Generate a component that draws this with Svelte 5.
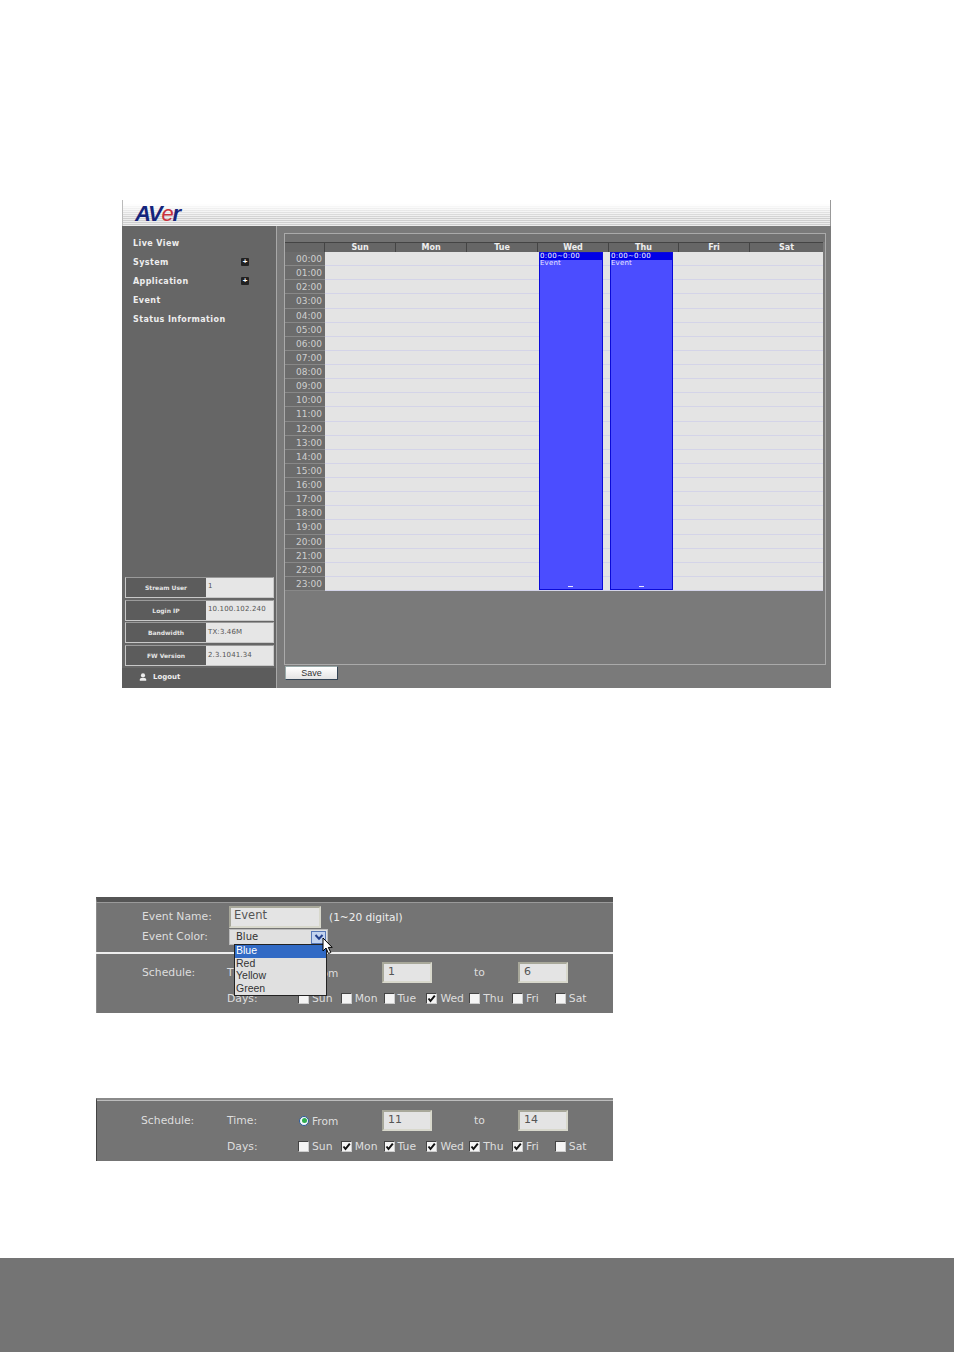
<script>
  const nav = [
    { label: 'Live View' },
    { label: 'System', plus: true },
    { label: 'Application', plus: true },
    { label: 'Event' },
    { label: 'Status Information' }
  ];
  const stats = [
    ['Stream User', '1'],
    ['Login IP', '10.100.102.240'],
    ['Bandwidth', 'TX:3.46M'],
    ['FW Version', '2.3.1041.34']
  ];
  const cols = [
    ['Sun', 71], ['Mon', 71], ['Tue', 71], ['Wed', 71], ['Thu', 70], ['Fri', 71], ['Sat', 74]
  ];
  const hours = Array.from({ length: 24 }, (_, i) => String(i).padStart(2, '0') + ':00');
  const days = ['Sun', 'Mon', 'Tue', 'Wed', 'Thu', 'Fri', 'Sat'];
  const daysA = [false, false, false, true, false, false, false];
  const daysB = [false, true, true, true, true, true, false];
  const options = ['Blue', 'Red', 'Yellow', 'Green'];
</script>

{#snippet dayRow(checked)}
  <div class="dayset">
    {#each days as d, i}
      <span class="day">
        <span class="check">
          {#if checked[i]}
            <svg viewBox="0 0 9 9" width="9" height="9"><path d="M1.5 4.5 L3.5 7 L7.8 1.6" fill="none" stroke="#111" stroke-width="2"/></svg>
          {/if}
        </span>
        <span class="daytext">{d}</span>
      </span>
    {/each}
  </div>
{/snippet}

<div class="page">
  <section class="app">
    <header class="apphead">
      <span class="logo">AV<span class="logo-e">e</span>r</span>
    </header>
    <div class="appbody">
      <aside class="side">
        <nav class="nav">
          {#each nav as n}
            <div class="navitem">
              <span>{n.label}</span>
              {#if n.plus}<span class="plus">+</span>{/if}
            </div>
          {/each}
        </nav>
        <div class="stats">
          {#each stats as s}
            <div class="stat">
              <span class="statlabel">{s[0]}</span>
              <span class="statvalue">{s[1]}</span>
            </div>
          {/each}
        </div>
        <div class="logout">
          <svg viewBox="0 0 10 10" width="8" height="8"><circle cx="5" cy="3" r="2.6" fill="#eee"/><path d="M1 9.6 V8 Q1 6.5 3 6.2 H7 Q9 6.5 9 8 V9.6 Z" fill="#eee"/></svg>
          <span>Logout</span>
        </div>
      </aside>
      <main class="main">
        <div class="panel">
          <div class="panelbar"></div>
          <div class="cal">
            <div class="calhead">
              <span class="corner"></span>
              {#each cols as c}
                <span class="colhead" style="width:{c[1]}px">{c[0]}</span>
              {/each}
            </div>
            {#each hours as h}
              <div class="calrow">
                <span class="hour">{h}</span>
                <span class="cells"></span>
              </div>
            {/each}
            <div class="event wed">
              <div class="evtime">0:00~0:00</div>
              <div class="evname">Event</div>
              <div class="evgrip"></div>
            </div>
            <div class="event thu">
              <div class="evtime">0:00~0:00</div>
              <div class="evname">Event</div>
              <div class="evgrip"></div>
            </div>
          </div>
        </div>
        <button class="save">Save</button>
      </main>
    </div>
  </section>

  <section class="form formA">
    <div class="part partA">
      <div class="frow nameRow">
        <span class="lab">Event Name:</span>
        <span class="field nameField">Event</span>
        <span class="hint">(1~20 digital)</span>
      </div>
      <div class="frow colorRow">
        <span class="lab">Event Color:</span>
        <span class="select">
          <span>Blue</span>
          <span class="arrow">
            <svg viewBox="0 0 10 10" width="10" height="10"><path d="M1.5 3 L5 6.8 L8.5 3" fill="none" stroke="#24408c" stroke-width="2"/></svg>
          </span>
        </span>
      </div>
    </div>
    <div class="part partB">
      <div class="frow schedRow">
        <span class="lab">Schedule:</span>
        <span class="lab2">Time:</span>
        <span class="radioCell">
          <span class="radio"><span class="dot"></span></span>
          <span class="fromword">From</span>
        </span>
        <span class="field num">1</span>
        <span class="toword">to</span>
        <span class="field num">6</span>
      </div>
      <div class="frow daysRow">
        <span class="lab"></span>
        <span class="lab2">Days:</span>
        {@render dayRow(daysA)}
      </div>
    </div>
    <div class="dropdown">
      {#each options as o, i}
        <div class="opt" class:sel={i === 0}>{o}</div>
      {/each}
    </div>
    <svg class="cursor" viewBox="0 0 12 18" width="12" height="18"><path d="M1 1 V14 L4 11 L6.5 16.5 L8.8 15.5 L6.3 10.4 L10.2 10.4 Z" fill="#fff" stroke="#000" stroke-width="1"/></svg>
  </section>

  <section class="form formB">
    <div class="frow schedRow2">
      <span class="lab labB">Schedule:</span>
      <span class="lab2">Time:</span>
      <span class="radioCell">
        <span class="radio"><span class="dot"></span></span>
        <span class="fromword">From</span>
      </span>
      <span class="field num">11</span>
      <span class="toword">to</span>
      <span class="field num">14</span>
    </div>
    <div class="frow daysRow2">
      <span class="lab labB"></span>
      <span class="lab2">Days:</span>
      {@render dayRow(daysB)}
    </div>
  </section>

  <footer class="foot"></footer>
</div>

<style>
  :global(body) { margin: 0; background: #fff; }
  .page {
    width: 954px; height: 1352px; display: flex; flex-direction: column;
    padding-top: 200px; box-sizing: border-box; overflow: hidden;
    font-family: "DejaVu Sans", sans-serif;
  }
  .app { margin-left: 122px; width: 709px; height: 488px; display: flex; flex-direction: column; flex: none; }
  .apphead {
    height: 26px; box-sizing: border-box; padding-left: 12px;
    border-left: 1px solid #bbb; border-right: 1px solid #999;
    background:
      linear-gradient(180deg, #fff 0, #fff 15%, rgba(255,255,255,0) 70%),
      repeating-linear-gradient(180deg, #cfcfcf 0 1px, #ededed 1px 2px);
    display: flex; align-items: flex-end;
  }
  .logo {
    font: italic bold 22px/24px "Liberation Sans", sans-serif; color: #14247c;
    letter-spacing: -1.2px; height: 24px;
  }
  .logo-e { color: #c8323c; font-weight: 400; }
  .appbody { flex: 1; display: flex; min-height: 0; }
  .side { width: 155px; flex: none; background: #666; display: flex; flex-direction: column; border-right: 1px solid #a8a8a8; box-sizing: border-box; }
  .nav { padding: 7.5px 11px 0 11px; flex: 1; }
  .navitem {
    height: 19px; display: flex; align-items: center; justify-content: space-between;
    font-size: 8px; font-weight: 700; color: #eee; padding-right: 16px; letter-spacing: .41px;
  }
  .plus {
    width: 8px; height: 8px; background: #222; color: #fff; font: bold 8px/8px "Liberation Sans", sans-serif;
    text-align: center; border-radius: 1px; letter-spacing: 0;
  }
  .stats { display: flex; flex-direction: column; gap: 1.7px; padding: 0 2px 0 3px; }
  .stat { height: 19px; display: flex; background: #e6e6e6; border: 1px solid #c8c8c8; border-top-color: #9a9a9a; box-sizing: content-box; }
  .statlabel {
    width: 80px; background: #5c5c5c; color: #e4e4e4; font-size: 6px; font-weight: 700;
    display: flex; align-items: center; justify-content: center; flex: none;
  }
  .statvalue { padding-left: 2px; font-size: 7px; color: #555; display: flex; align-items: center; padding-bottom: 2px; letter-spacing: .15px; }
  .logout {
    height: 20px; margin-top: 2px; background: #5c5c5c; color: #eee; font-size: 7px; font-weight: 700;
    display: flex; align-items: center; gap: 6px; padding: 0 0 2px 17px; flex: none; box-sizing: border-box;
  }
  .main { flex: 1; background: #7a7a7a; display: flex; flex-direction: column; padding: 7px 5px 7px 7px; min-width: 0; }
  .panel { height: 432px; border: 1px solid #aaa; box-sizing: border-box; flex: none; }
  .panelbar { height: 8px; background: #727272; }
  .cal { position: relative; width: 538px; }
  .calhead { display: flex; height: 10px; background: #666; border-top: 1px solid #444; box-sizing: border-box; }
  .corner { width: 39px; flex: none; }
  .colhead {
    box-sizing: border-box; border-left: 1px solid #444; color: #eee; font-size: 8px; line-height: 9px;
    font-weight: 700; text-align: center; flex: none;
  }
  .calrow { height: 14.14px; display: flex; }
  .hour {
    width: 40px; box-sizing: border-box; background: #6c6c6c; color: #cfcfcf; font-size: 9px; line-height: 14px;
    text-align: right; padding-right: 3px; border-bottom: 1px solid #888; flex: none;
  }
  .cells { flex: 1; background: #e4e4e4; border-bottom: 1px solid #d4d4e8; }
  .event {
    position: absolute; top: 10px; height: 338px; box-sizing: border-box; background: #4b4dff;
    border: 1px solid #0a0ad8; color: #e8e8ff; font-size: 7px; line-height: 7px;
  }
  .wed { left: 254px; width: 64px; }
  .thu { left: 325px; width: 63px; }
  .evtime { background: #0000e6; height: 7px; color: #fff; letter-spacing: .3px; }
  .evname { font-size: 7px; line-height: 7px; letter-spacing: .2px; }
  .evgrip { position: absolute; bottom: 2px; left: 50%; width: 5px; height: 1.5px; margin-left: -3px; background: #e8e8ff; }
  .save {
    margin: 1px 0 0 1px; width: 53px; height: 14px; padding: 0; box-sizing: border-box;
    background: linear-gradient(180deg, #fff, #e4e4e4); border: 1px solid #9aa; border-right-color: #345; border-bottom-color: #345;
    font: 9px/10px "Liberation Sans", sans-serif; color: #333; border-radius: 1px;
  }

  .form { margin-left: 96px; width: 517px; background: #747474; position: relative; flex: none; color: #dedede; font-size: 10.8px; box-sizing: border-box; }
  .formA { margin-top: 209px; height: 116px; border-top: 5px solid #555; border-left: 1px solid #8a8a8a; }
  .partA { height: 52px; border-top: 1px solid #9a9a9a; padding-top: 3px; box-sizing: border-box; border-bottom: 2px solid #eee; margin-left: -1px; }
  .partB { padding-top: 8px; margin-left: -1px; }
  .frow { display: flex; align-items: center; }
  .lab { width: 85px; padding-left: 46px; flex: none; }
  .lab2 { width: 72px; flex: none; }
  .nameRow { height: 22px; }
  .colorRow { height: 16px; margin-top: 1px; }
  .nameRow .lab, .colorRow .lab { width: 87px; padding-bottom: 1px; box-sizing: content-box; }
  .field {
    background: #e4e4e4; color: #555; box-sizing: border-box; display: block;
    border: 2px solid; border-color: #a8a89a #d8d8cc #d8d8cc #a8a89a;
  }
  .nameField { width: 92px; height: 22px; font-size: 11.5px; line-height: 15px; padding-left: 3px; }
  .hint { margin-left: 8px; font-size: 10.6px; color: #eee; padding-bottom: 1px; }
  .select {
    width: 99px; height: 16px; background: #e0e0e0; color: #333; box-sizing: border-box; padding-left: 6px;
    border: 1px solid #bbb; display: flex; align-items: center; justify-content: space-between; font-size: 10px; line-height: 12px;
  }
  .arrow { width: 15px; height: 13px; background: #c4d4f0; border: 1px solid #5878b8; box-sizing: border-box; display: flex; align-items: center; justify-content: center; margin-right: 1px; }
  .schedRow { height: 21px; }
  .radioCell { width: 83px; flex: none; display: flex; align-items: center; gap: 3px; font-size: 10.6px; }
  .num { width: 50px; height: 21px; font-size: 11px; line-height: 15px; padding-left: 4px; flex: none; }
  .toword { width: 86px; flex: none; padding-left: 42px; box-sizing: border-box; }
  .daysRow { height: 16px; margin-top: 7px; }
  .dayset { display: flex; margin-left: -1px; }
  .day { width: 42.8px; flex: none; display: flex; align-items: center; gap: 3px; font-size: 10.8px; }
  .check {
    width: 11px; height: 11px; box-sizing: border-box; background: #f4f4f4; flex: none;
    border: 1px solid; border-color: #444 #ccc #ccc #444; display: flex; align-items: center; justify-content: center;
  }
  .dropdown {
    position: absolute; left: 137px; top: 42px; width: 93px; height: 52px; box-sizing: border-box;
    background: #e0e0e0; border: 1px solid #222; color: #333; font: 10.5px/11.5px "Liberation Sans", sans-serif; z-index: 2;
  }
  .opt { padding-left: 1px; height: 12.5px; }
  .sel { background: #316ac5; color: #fff; }
  .cursor { position: absolute; left: 225px; top: 35px; z-index: 3; }

  .formB { margin-top: 85px; height: 63px; border-top: 2px solid #8a8a8a; border-left: 1px solid #444; padding-top: 10px; box-shadow: inset 0 1px 0 #bdbdbd; }
  .labB { width: 86px; padding-left: 44px; }
  .schedRow2 { height: 21px; }
  .daysRow2 { height: 16px; margin-top: 7px; }
  .radio {
    width: 10px; height: 10px; border-radius: 50%; background: #f4f8ff; border: 1px solid #2a5a9a; box-sizing: border-box;
    display: flex; align-items: center; justify-content: center; flex: none;
  }
  .dot { width: 5px; height: 5px; border-radius: 50%; background: #2fae4e; }
  .foot { margin-top: auto; height: 94px; background: #747474; flex: none; }
</style>
